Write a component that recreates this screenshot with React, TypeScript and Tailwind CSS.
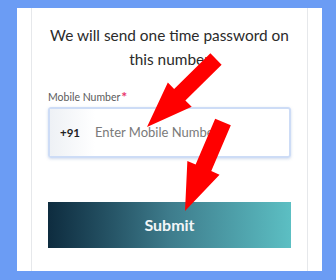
const arrows = [
  { tail: [216, 59], tip: [147, 127], shaft: 8, headLen: 46, head: 17 },
  { tail: [223, 122], tip: [185, 211], shaft: 8.5, headLen: 47, head: 17.5 },
];

function arrowPoints(a: (typeof arrows)[number]) {
  const [tx, ty] = a.tail;
  const [px, py] = a.tip;
  const len = Math.hypot(px - tx, py - ty);
  const ux = (px - tx) / len;
  const uy = (py - ty) / len;
  const nx = -uy;
  const ny = ux;
  const bx = px - ux * a.headLen;
  const by = py - uy * a.headLen;
  const pts = [
    [tx + nx * a.shaft, ty + ny * a.shaft],
    [bx + nx * a.shaft, by + ny * a.shaft],
    [bx + nx * a.head, by + ny * a.head],
    [px, py],
    [bx - nx * a.head, by - ny * a.head],
    [bx - nx * a.shaft, by - ny * a.shaft],
    [tx - nx * a.shaft, ty - ny * a.shaft],
  ];
  return pts.map((p) => p.join(",")).join(" ");
}

export default function App() {
  return (
    <div className="relative w-[336px] h-[280px] bg-[#6b9cf4] pt-[8px] pl-[17px] pr-[14px] pb-[9px] font-['Lato',sans-serif]">
      <div className="h-full bg-white px-[14px]">
        <div className="h-full border-x border-[#e6e8eb] px-[16px] pt-[15px]">
          <p className="-mx-[8px] text-center text-[15.4px] leading-[24px] text-[#2b2b2b]">
            We will send one time password on this number
          </p>
          <label className="mt-[19px] flex items-center text-[10.5px] leading-[14px] text-[#5b5b5b]">
            Mobile Number<span className="ml-[1px] text-[14px] font-bold leading-[14px] text-[#e8336b]">*</span>
          </label>
          <div className="mt-[3px] flex h-[51px] items-center overflow-hidden rounded-[3px] border-2 border-[#cddcf6] shadow-[0_1px_3px_rgba(120,150,200,0.35)]">
            <div className="flex h-full items-center bg-gradient-to-r from-[#eef1f5] to-white pl-[10px] pr-[15px] text-[11.5px] font-bold text-[#222]">
              +91
            </div>
            <span className="text-[13px] text-[#7a7a7a]">Enter Mobile Number</span>
          </div>
          <button className="mt-[44px] flex h-[46px] w-full items-center justify-center bg-gradient-to-r from-[#0e2c3f] via-[#3e7c8c] to-[#5cbfc3] text-[16px] font-bold text-[#f2f6f8]">
            Submit
          </button>
        </div>
      </div>
      <svg className="absolute inset-0" width="336" height="280">
        {arrows.map((a, i) => (
          <polygon key={i} points={arrowPoints(a)} fill="#ff0000" />
        ))}
      </svg>
    </div>
  );
}
